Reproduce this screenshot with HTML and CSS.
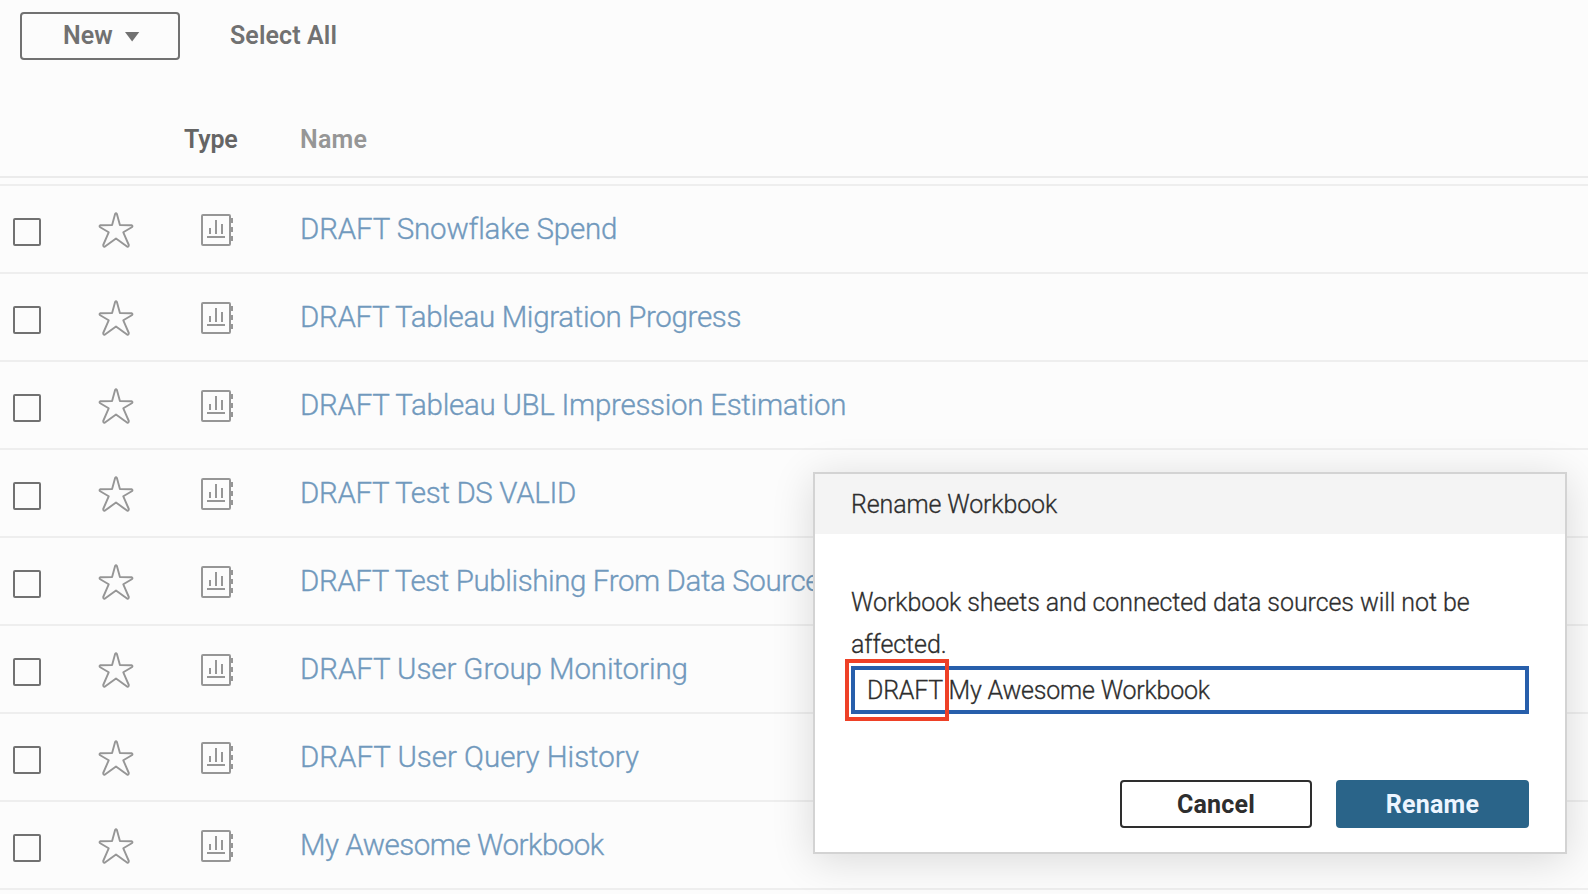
FILE: index.html
```
<!DOCTYPE html>
<html lang="en">
<head>
<meta charset="utf-8">
<title>Workbooks</title>
<link rel="stylesheet" href="styles.css">
</head>
<body>
<svg class="defs" aria-hidden="true">
  <symbol id="star" viewBox="0 0 38 38">
    <path d="M18.100 3 Q19 1.500 19.900 3 L22.900 14 L34.500 14.200 Q36.300 15 34.800 16.300 L26.300 21.300 L31.800 34 Q31.800 36.200 30 35.600 L19 27.500 L8 35.600 Q6.200 36.200 6.200 34 L11.700 21.300 L3.200 16.300 Q1.700 15 3.500 14.200 L15.100 14 Z" fill="none" stroke="#969696" stroke-width="1.900" stroke-linejoin="round"/>
  </symbol>
  <symbol id="workbook" viewBox="0 0 32 32">
    <rect x="1" y="1" width="28" height="30" rx="1" fill="none" stroke="#969696" stroke-width="2"/>
    <path d="M29 4h3v5h-3zM29 13h3v5h-3zM29 22h3v5h-3zM8 14h2v6H8zM14 6h2v14h-2zM20 10h2v10h-2zM6 22h18v2H6z" fill="#969696"/>
  </symbol>
</svg>
<div class="page">
  <div class="toolbar">
    <button class="new"><span>New</span><span class="caret"></span></button>
    <span class="select-all">Select All</span>
  </div>
  <div class="columns"><span class="type">Type</span><span class="name">Name</span></div>
  <div class="rows">
    <div class="row"><span class="check"></span><svg class="star"><use href="#star"/></svg><svg class="book"><use href="#workbook"/></svg><a class="link n1">DRAFT Snowflake Spend</a></div>
    <div class="row"><span class="check"></span><svg class="star"><use href="#star"/></svg><svg class="book"><use href="#workbook"/></svg><a class="link n2">DRAFT Tableau Migration Progress</a></div>
    <div class="row"><span class="check"></span><svg class="star"><use href="#star"/></svg><svg class="book"><use href="#workbook"/></svg><a class="link n3">DRAFT Tableau UBL Impression Estimation</a></div>
    <div class="row"><span class="check"></span><svg class="star"><use href="#star"/></svg><svg class="book"><use href="#workbook"/></svg><a class="link n4">DRAFT Test DS VALID</a></div>
    <div class="row"><span class="check"></span><svg class="star"><use href="#star"/></svg><svg class="book"><use href="#workbook"/></svg><a class="link n5">DRAFT Test Publishing From Data Source</a></div>
    <div class="row"><span class="check"></span><svg class="star"><use href="#star"/></svg><svg class="book"><use href="#workbook"/></svg><a class="link n6">DRAFT User Group Monitoring</a></div>
    <div class="row"><span class="check"></span><svg class="star"><use href="#star"/></svg><svg class="book"><use href="#workbook"/></svg><a class="link n7">DRAFT User Query History</a></div>
    <div class="row"><span class="check"></span><svg class="star"><use href="#star"/></svg><svg class="book"><use href="#workbook"/></svg><a class="link n8">My Awesome Workbook</a></div>
  </div>
</div>
<div class="dialog" role="dialog">
  <div class="title"><span>Rename Workbook</span></div>
  <div class="content">
    <p class="message">Workbook sheets and connected data sources will not be<br>affected.</p>
    <div class="field"><span class="value"><span class="prefix">DRAFT </span>My Awesome Workbook</span><span class="marker"></span></div>
    <div class="actions"><button class="cancel">Cancel</button><button class="rename">Rename</button></div>
  </div>
</div>
</body>
</html>
```
FILE: styles.css
```
* { box-sizing: border-box; }
body {
  margin: 0;
  width: 1588px;
  height: 894px;
  overflow: hidden;
  position: relative;
  background: #fcfcfc;
  font-family: Roboto, "Liberation Sans", sans-serif;
  font-size: 25px;
}
.defs { position: absolute; width: 0; height: 0; }
button { font: inherit; padding: 0; margin: 0; }
.toolbar { display: flex; padding: 12px 0 0 20px; height: 110px; font-weight: 600; color: #717171; }
.new {
  display: flex; align-items: center; justify-content: flex-start;
  width: 160px; height: 48px; padding: 0 0 1px 41px;
  border: 2px solid #717171; border-radius: 4px;
  background: transparent; color: #717171; font-weight: 600;
}
.caret { width: 15px; height: 10px; margin: 2px 0 0 12px; background: #717171; clip-path: polygon(0 0, 100% 0, 50% 100%); }
.select-all { margin-left: 50px; line-height: 47px; letter-spacing: .1px; }
.columns { display: grid; grid-template-columns: 184px 116px 1fr; height: 68px; border-bottom: 2px solid #ebebeb; line-height: 59px; font-weight: 600; }
.type { grid-column: 2; color: #656565; letter-spacing: -.2px; }
.name { color: #969696; letter-spacing: .2px; }
.rows { margin-top: 6px; border-top: 2px solid #eee; }
.row { display: flex; align-items: flex-start; height: 88px; padding-left: 13px; border-bottom: 2px solid #eee; }
.check { width: 28px; height: 28px; margin-top: 32px; border: 2px solid #717171; border-radius: 2px; }
.star { width: 38px; height: 38px; margin: 25px 0 0 56px; }
.book { width: 32px; height: 32px; margin: 28px 0 0 66px; }
.link { margin-left: 67px; font-size: 29.500px; font-weight: 300; line-height: 86px; height: 86px; white-space: nowrap; color: #7199bd; -webkit-text-stroke: .35px #7199bd; }
.n1 { letter-spacing: -.16px; }
.n2 { letter-spacing: -.33px; }
.n3 { letter-spacing: -.28px; }
.n4 { letter-spacing: -.34px; }
.n5 { letter-spacing: -.4px; }
.n6 { letter-spacing: -.09px; }
.n7 { letter-spacing: -.03px; }
.n8 { letter-spacing: -.49px; }
.dialog {
  position: absolute; left: 813px; top: 472px; width: 754px; height: 382px;
  border: 2px solid #d3d3d3; background: #fff; color: #2e2e2e; font-weight: 300;
  box-shadow: 0 6px 40px rgba(0, 0, 0, .14);
}
.title, .message, .value { -webkit-text-stroke: .3px #2e2e2e; }
.title { height: 60px; padding-left: 36px; background: #f4f4f4; line-height: 62px; letter-spacing: -.13px; }
.content { padding: 48px 36px 0; }
.message { margin: 0; line-height: 42px; height: 84px; white-space: nowrap; letter-spacing: -.08px; }
.field { position: relative; width: 678px; height: 48px; padding-left: 12px; border: 4px solid #275fab; line-height: 42px; white-space: pre; letter-spacing: -.21px; }
.marker { position: absolute; left: -10px; top: -11px; width: 104px; height: 62px; border: 4px solid #ee4127; }
.actions { display: flex; justify-content: flex-end; gap: 24px; margin-top: 66px; width: 678px; }
.cancel, .rename { width: 192px; height: 48px; border: 2px solid #2e2e2e; border-radius: 4px; background: #fff; color: #2e2e2e; font-weight: 700; letter-spacing: .2px; }
.rename { width: 193px; border-color: #2a6489; background: #2a6489; color: #edf5ff; }
```
